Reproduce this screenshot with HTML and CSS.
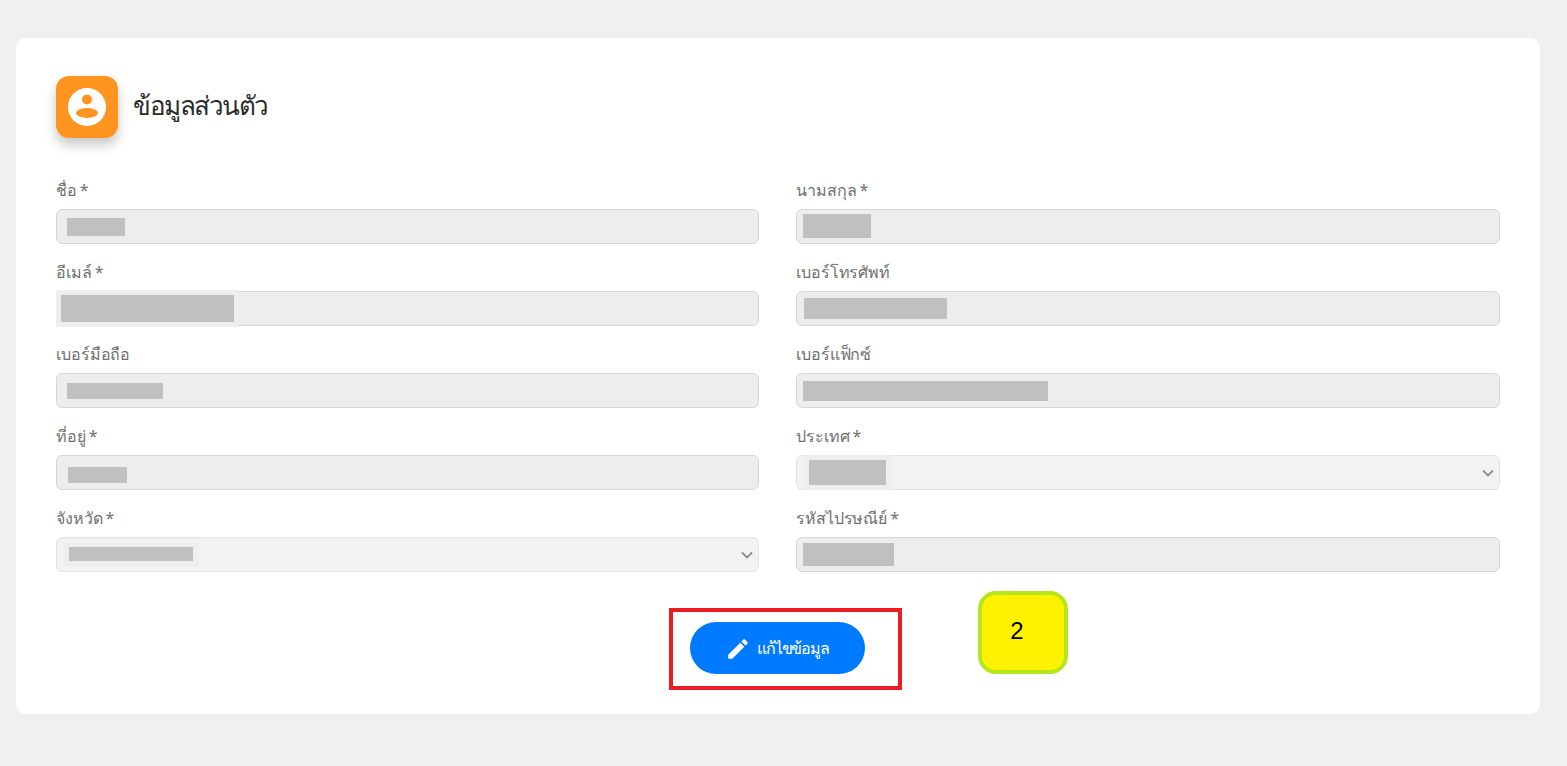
FILE: index.html
```html
<!DOCTYPE html>
<html lang="th">
<head>
<meta charset="utf-8">
<title>ข้อมูลส่วนตัว</title>
<link rel="stylesheet" href="styles.css">
</head>
<body>
<main class="card">
  <header class="head">
    <div class="head-icon">
      <svg viewBox="0 0 38 38" width="38" height="38"><circle cx="19" cy="19" r="19" fill="#fff"/><circle cx="19" cy="11.5" r="5" fill="#ff9520"/><ellipse cx="19" cy="25" rx="11" ry="5" fill="#ff9520"/></svg>
    </div>
    <h1 class="title">ข้อมูลส่วนตัว</h1>
  </header>
  <div class="grid">
    <div class="field"><label class="label">ชื่อ *</label><div class="box"><span class="mask m-first"></span></div></div>
    <div class="field"><label class="label">นามสกุล *</label><div class="box"><span class="mask m-last"></span></div></div>
    <div class="field"><label class="label">อีเมล์ *</label><div class="box"><span class="halo h-email"></span><span class="mask m-email"></span></div></div>
    <div class="field"><label class="label">เบอร์โทรศัพท์</label><div class="box"><span class="mask m-phone"></span></div></div>
    <div class="field"><label class="label">เบอร์มือถือ</label><div class="box"><span class="mask m-mobile"></span></div></div>
    <div class="field"><label class="label">เบอร์แฟ็กซ์</label><div class="box"><span class="mask m-fax"></span></div></div>
    <div class="field"><label class="label">ที่อยู่ *</label><div class="box"><span class="mask m-addr"></span></div></div>
    <div class="field"><label class="label">ประเทศ *</label><div class="box select"><span class="halo h-country"></span><span class="mask m-country"></span><svg class="chev" viewBox="0 0 12 8" width="12" height="8"><path d="M1 1.5l5 5 5-5" fill="none" stroke="#8f8f8f" stroke-width="1.8"/></svg></div></div>
    <div class="field"><label class="label">จังหวัด *</label><div class="box select"><span class="halo h-prov"></span><span class="mask m-prov"></span><svg class="chev" viewBox="0 0 12 8" width="12" height="8"><path d="M1 1.5l5 5 5-5" fill="none" stroke="#8f8f8f" stroke-width="1.8"/></svg></div></div>
    <div class="field"><label class="label">รหัสไปรษณีย์ *</label><div class="box"><span class="mask m-zip"></span></div></div>
  </div>
  <div class="actions">
    <div class="btn-wrap">
      <button class="btn" type="button">
        <svg class="btn-icon" viewBox="0 0 24 24" width="26" height="26"><path fill="#fff" d="M3 17.25V21h3.75L17.81 9.94l-3.75-3.75L3 17.25zM20.71 7.04a1 1 0 0 0 0-1.41l-2.34-2.34a1 1 0 0 0-1.41 0l-1.83 1.83 3.75 3.75 1.83-1.83z"/></svg>
        <span>แก้ไขข้อมูล</span>
      </button>
      <span class="red-frame"></span>
      <span class="badge">2</span>
    </div>
  </div>
</main>
</body>
</html>
```
FILE: styles.css
```css
* { box-sizing: border-box; }
html, body { height: 100%; }
body {
  margin: 0;
  padding: 38px 27px 0 16px;
  background: #f0f0f0;
  font-family: "Noto Sans", "DejaVu Sans", sans-serif;
  overflow: hidden;
}
.card {
  background: #fff;
  border-radius: 10px;
  height: 676px;
  padding: 38px 40px 40px;
}
.head {
  display: flex;
  align-items: center;
  gap: 15px;
  height: 62px;
  margin-bottom: 40px;
}
.head-icon {
  width: 62px;
  height: 62px;
  border-radius: 13px;
  background: #ff9520;
  box-shadow: 0 7px 12px rgba(0, 0, 0, .22);
  display: flex;
  align-items: center;
  justify-content: center;
}
.title {
  margin: 0 0 4px;
  font-size: 26px;
  font-weight: 400;
  color: #2b2b2b;
  letter-spacing: -1.45px;
}
.grid {
  display: grid;
  grid-template-columns: 703px 704px;
  column-gap: 37px;
}
.field { height: 82px; }
.label {
  display: block;
  height: 24px;
  line-height: 24px;
  margin-bottom: 7px;
  font-size: 16px;
  letter-spacing: -0.1px;
  word-spacing: -1px;
  color: #707070;
}
.box {
  position: relative;
  height: 35px;
  background: #ededed;
  border: 1px solid #d6d6d6;
  border-radius: 6px;
}
.box.select { background: #f2f2f2; border-color: #e2e2e2; }
.mask, .halo { position: absolute; display: block; }
.mask { background: #c0c0c0; }
.halo { background: #eeeeee; }
.chev { position: absolute; right: 5px; top: 13px; }
.m-first { left: 10px; top: 8px; width: 58px; height: 18px; }
.m-last { left: 6px; top: 4px; width: 68px; height: 24px; }
.h-email { left: -1px; top: -2px; width: 183px; height: 37px; }
.m-email { left: 4px; top: 3px; width: 173px; height: 27px; }
.m-phone { left: 7px; top: 6px; width: 143px; height: 21px; }
.m-mobile { left: 10px; top: 9px; width: 96px; height: 16px; }
.m-fax { left: 6px; top: 7px; width: 245px; height: 20px; }
.m-addr { left: 11px; top: 11px; width: 59px; height: 16px; }
.h-country { left: 7px; top: -1px; width: 87px; height: 35px; }
.m-country { left: 12px; top: 4px; width: 77px; height: 25px; }
.h-prov { left: 7px; top: 5px; width: 134px; height: 23px; }
.m-prov { left: 12px; top: 9px; width: 124px; height: 14px; }
.m-zip { left: 6px; top: 5px; width: 91px; height: 23px; }
.actions {
  display: flex;
  justify-content: center;
  margin-top: 34px;
  padding-right: 2px;
}
.btn-wrap { position: relative; }
.btn {
  display: flex;
  align-items: center;
  justify-content: center;
  gap: 6px;
  width: 175px;
  height: 52px;
  border: 0;
  border-radius: 26px;
  background: #007bff;
  color: #fff;
  font: inherit;
  font-size: 16px;
  font-weight: 500;
  letter-spacing: -1.2px;
}
.btn-icon { margin-top: 2px; }
.red-frame {
  position: absolute;
  left: -21px;
  right: -37px;
  top: -14px;
  bottom: -16px;
  border: 4px solid #ed1c24;
}
.badge {
  position: absolute;
  left: 288px;
  top: -31px;
  width: 90px;
  height: 83px;
  display: flex;
  align-items: center;
  justify-content: center;
  padding: 0 11px 4px 0;
  background: #fff200;
  border: 4px solid #b5e61d;
  border-radius: 18px;
  color: #000;
  font-family: "Liberation Sans", sans-serif;
  font-size: 24px;
}
```
